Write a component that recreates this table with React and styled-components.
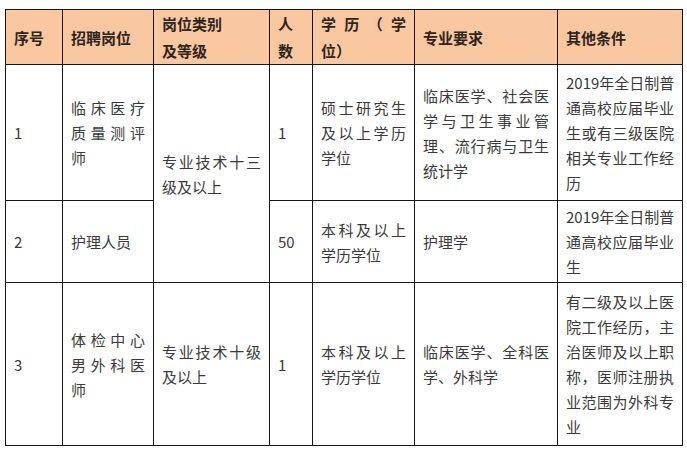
import React from 'react';
import styled, { createGlobalStyle } from 'styled-components';

const GlobalStyle = createGlobalStyle`
  html, body {
    margin: 0;
    padding: 0;
    background: #ffffff;
  }
  body {
    font-family: "Noto Sans CJK SC", "Liberation Sans", sans-serif;
  }
`;

const Page = styled.div`
  padding: 9px 0 0 5px;
  width: 687px;
  height: 452px;
  box-sizing: border-box;
  overflow: hidden;
`;

const Table = styled.table`
  border-collapse: collapse;
  table-layout: fixed;
  width: 678px;
`;

const HeadRow = styled.tr`
  height: 55px;
  background: #f9c8a0;
`;

const BodyRow = styled.tr`
  height: ${p => p.$h}px;
`;

const HeadCell = styled.th`
  border: 1px solid #141414;
  padding: 0 8px;
  text-align: left;
  vertical-align: middle;
  font-size: 15px;
  font-weight: 700;
  line-height: 27px;
  color: #2e241c;
`;

const Cell = styled.td`
  border: 1px solid #141414;
  padding: 0 8px;
  vertical-align: middle;
  font-size: 15px;
  line-height: 25px;
  color: #3a3a3a;
`;

const Line = styled.div`
  white-space: nowrap;
  ${p => p.$justify && `
    text-align: justify;
    text-align-last: justify;
  `}
`;

const widths = [57, 91, 116, 43, 102, 143, 125];

const head = [
  { lines: ['序号'] },
  { lines: ['招聘岗位'] },
  { lines: ['岗位类别', '及等级'] },
  { lines: ['人', '数'] },
  { lines: ['学历（学', '位）'], j: true },
  { lines: ['专业要求'] },
  { lines: ['其他条件'] },
];

const rows = [
  {
    h: 136,
    cells: [
      { lines: ['1'] },
      { lines: ['临床医疗', '质量测评', '师'], j: true },
      { lines: ['专业技术十三', '级及以上'], j: true, span: 2 },
      { lines: ['1'] },
      { lines: ['硕士研究生', '及以上学历', '学位'], j: true },
      { lines: ['临床医学、社会医', '学与卫生事业管', '理、流行病与卫生', '统计学'], j: true },
      { lines: ['2019年全日制普', '通高校应届毕业', '生或有三级医院', '相关专业工作经', '历'], j: true },
    ],
  },
  {
    h: 82,
    cells: [
      { lines: ['2'] },
      { lines: ['护理人员'] },
      { lines: ['50'] },
      { lines: ['本科及以上', '学历学位'], j: true },
      { lines: ['护理学'] },
      { lines: ['2019年全日制普', '通高校应届毕业', '生'], j: true },
    ],
  },
  {
    h: 163,
    cells: [
      { lines: ['3'] },
      { lines: ['体检中心', '男外科医', '师'], j: true },
      { lines: ['专业技术十级', '及以上'], j: true },
      { lines: ['1'] },
      { lines: ['本科及以上', '学历学位'], j: true },
      { lines: ['临床医学、全科医', '学、外科学'], j: true },
      { lines: ['有二级及以上医', '院工作经历，主', '治医师及以上职', '称，医师注册执', '业范围为外科专', '业'], j: true },
    ],
  },
];

const renderLines = (cell) =>
  cell.lines.map((text, i) => (
    <Line key={i} $justify={cell.j && i < cell.lines.length - 1}>
      {text}
    </Line>
  ));

export default function App() {
  return (
    <Page>
      <GlobalStyle />
      <Table>
        <colgroup>
          {widths.map((w, i) => (
            <col key={i} style={{ width: w }} />
          ))}
        </colgroup>
        <thead>
          <HeadRow>
            {head.map((cell, i) => (
              <HeadCell key={i}>{renderLines(cell)}</HeadCell>
            ))}
          </HeadRow>
        </thead>
        <tbody>
          {rows.map((row, r) => (
            <BodyRow key={r} $h={row.h}>
              {row.cells.map((cell, i) => (
                <Cell key={i} rowSpan={cell.span || 1}>
                  {renderLines(cell)}
                </Cell>
              ))}
            </BodyRow>
          ))}
        </tbody>
      </Table>
    </Page>
  );
}
